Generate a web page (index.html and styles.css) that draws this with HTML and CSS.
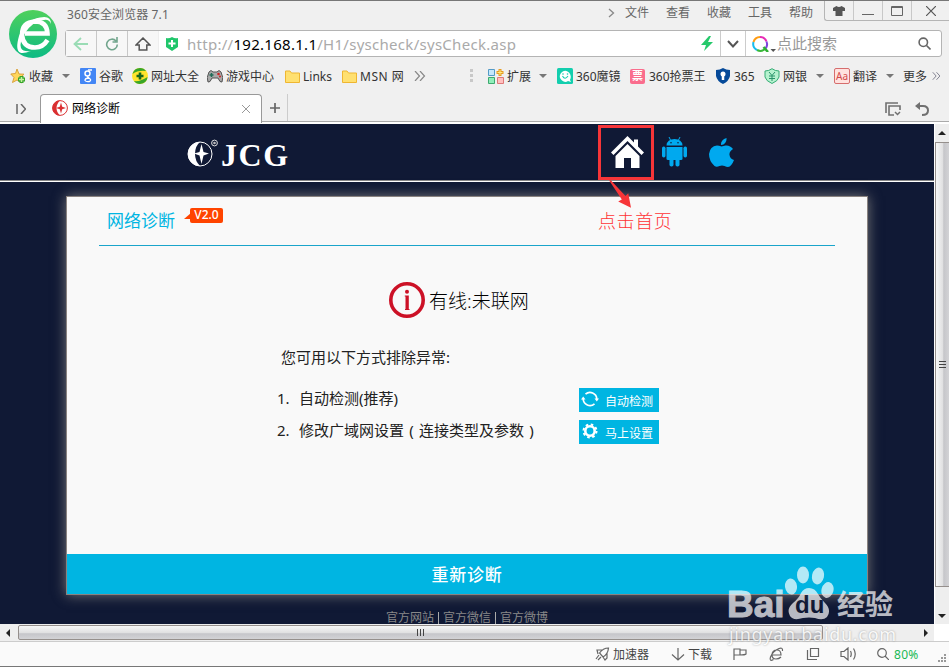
FILE: index.html
```html
<!DOCTYPE html>
<html lang="zh-CN">
<head>
  <meta charset="UTF-8" />
  <meta name="viewport" content="width=device-width, initial-scale=1.0"/>
  <title>网络诊断</title>
  <link rel="stylesheet" href="styles.css">
</head>
<body>
  <div class="window">
    <header class="top">
      <svg class="browser-logo" viewBox="0 0 48 48">
        <defs>
          <linearGradient id="green" x1="0" y1="0" x2="0" y2="1">
            <stop offset="0" stop-color="#4fd05c"/>
            <stop offset="1" stop-color="#0dbb84"/>
          </linearGradient>
        </defs>
        <circle cx="24" cy="24" r="24" fill="url(#green)"/>
        <path d="M16 23.500H38.500Q38 11.500 26 11.500Q13 12 13 25Q14 37.500 26 37.500Q34 37.500 38.500 30" fill="none" stroke="#fff" stroke-width="4.600"/>
        <path d="M42 14Q42 5 31 7.500Q16 10 10 26Q6 40 11 42.500Q14 44 22 41Q14 42 12 38Q10 32 16 23Q24 11 35 10Q40 9 42 14Z" fill="#fff"/>
      </svg>
      <div class="top-main">
        <div class="title-row">
          <span class="title">360安全浏览器 7.1</span>
          <nav class="menu">
            <svg class="menu-more" viewBox="0 0 7 10"><path d="M1 1L5.500 5L1 9"/></svg>
            <span>文件</span><span>查看</span><span>收藏</span><span>工具</span><span>帮助</span>
          </nav>
          <div class="controls">
            <span><svg width="12" height="10" viewBox="0 0 12 10"><path d="M3.500 0Q6 2 8.500 0L12 2V5H9.500V10H2.500V5H0V2Z" fill="#555"/></svg></span>
            <span><svg width="12" height="10" viewBox="0 0 12 10"><path d="M0 8.500H12" stroke="#666"/></svg></span>
            <span><svg width="12" height="10" viewBox="0 0 12 10"><path d="M.5 .5H11.500V9.500H.5ZM.5 1.500H11.500" fill="none" stroke="#666"/></svg></span>
            <span><svg width="10" height="10" viewBox="0 0 10 10"><path d="M0 0L10 10M10 0L0 10" stroke="#555" stroke-width="1.200"/></svg></span>
          </div>
        </div>
        <div class="address">
          <span class="nav-btn"><svg width="16" height="14" viewBox="0 0 16 14"><path d="M15 7H1.500M8 1L1.500 7L8 13" fill="none" stroke="#9adcb5" stroke-width="1.800"/></svg></span>
          <span class="nav-btn"><svg width="14" height="14" viewBox="0 0 14 14"><path d="M11 4A5.300 5.300 0 1 0 12.300 7.500M12 0V5H7.500" fill="none" stroke="#72a58d" stroke-width="1.600"/></svg></span>
          <span class="nav-btn home"><svg width="16" height="14" viewBox="0 0 16 14"><path d="M1 8L8 1L15 8H11.800V13H4.200V8Z" fill="none" stroke="#555" stroke-width="1.500"/></svg></span>
          <svg class="shield" viewBox="0 0 12 14"><path d="M0 1Q3 2 6 0Q9 2 12 1V10L6 14L0 10Z" fill="#20c66b"/><path d="M6 3V10M2.500 6.500H9.500" stroke="#fff" stroke-width="2"/></svg>
          <span class="url"><span class="scheme">http://</span><b>192.168.1.1</b><span class="path">/H1/syscheck/sysCheck.asp</span></span>
          <svg class="bolt" viewBox="0 0 12 15"><path d="M8 0L0 9H5L3 15L12 6H7L10 0Z" fill="#25c96b"/></svg>
          <span class="drop"><svg width="12" height="8" viewBox="0 0 12 8"><path d="M1 1L6 6.500L11 1" fill="none" stroke="#555" stroke-width="2"/></svg></span>
          <span class="search">
            <svg class="ring" viewBox="0 0 24 16">
              <g fill="none" stroke-width="2">
                <path d="M8 1A7 7 0 0 1 14.500 5.500" stroke="#e72bb5"/>
                <path d="M14.500 5.500A7 7 0 0 1 13 13" stroke="#7f45de"/>
                <path d="M13 13A7 7 0 0 1 5 14" stroke="#3ab839"/>
                <path d="M5 14A7 7 0 0 1 1.500 6" stroke="#18bbed"/>
                <path d="M1.500 6A7 7 0 0 1 8 1" stroke="#ff9c13"/>
                <path d="M11.500 11L16 16" stroke="#2eaf32" stroke-width="2.500"/>
              </g>
              <path d="M18.500 13H24L21.200 16Z" fill="#555"/>
            </svg>
            <span>点此搜索</span>
            <svg class="lens" viewBox="0 0 13 13"><circle cx="5.300" cy="5.300" r="4.200"/><path d="M8.500 8.500L12.500 12.500"/></svg>
          </span>
        </div>
      </div>
    </header>

    <div class="bookmarks">
      <span><svg class="icon" viewBox="0 0 16 16"><path d="M7 1L9 6L14 6.200L10.500 9.500L12 15L7 12L2.500 14.500L4 9.500L.8 6L5.500 5.500Z" fill="#ffd65b" stroke="#d9a23c"/><path d="M11.500 8V15M8 11.500H15" stroke="#36a52b" stroke-width="4"/><path d="M11.500 9V14M9 11.500H14" stroke="#c5f3a2" stroke-width="1.500"/></svg>收藏</span>
      <i class="caret"></i>
      <span><svg class="icon" viewBox="0 0 16 16"><rect width="16" height="16" rx="1" fill="#4386f5"/><circle cx="7.500" cy="5.500" r="2.500" fill="none" stroke="#fff" stroke-width="1.500"/><path d="M8 2H12M8 8Q7 9 9 10Q12 12 9.500 13.500Q6 14 5 12.500Q5 10 9 10" fill="none" stroke="#fff" stroke-width="1.300"/></svg>谷歌</span>
      <span><svg class="icon" viewBox="0 0 16 16"><circle cx="8" cy="8" r="8" fill="#ffe42c"/><path d="M.5 6Q2 0 8 0Q12 0 14 3Q6 2 .5 6M2 13Q8 14 15.500 9Q15 15 8 16Q4 16 2 13" fill="#39a629"/><path d="M8 4.500V11.500M4.500 8H11.500" stroke="#17671c" stroke-width="2.600"/></svg>网址大全</span>
      <span><svg class="icon" viewBox="0 0 16 16"><path d="M1 14Q-1 10 2 4Q4 1 6 4H10Q12 1 14 4Q17 10 15 14Q13 15 11 10H5Q3 15 1 14Z" fill="#a9a9a9" stroke="#555"/><path d="M4.500 5V9M2.500 7H6.500" stroke="#1d6b55" stroke-width="1.500"/><circle cx="11.500" cy="6" r="1.300" fill="#c22"/><circle cx="13" cy="8.500" r="1" fill="#c22"/></svg>游戏中心</span>
      <span><svg class="icon folder" viewBox="0 0 15 13"><path d="M.5 1H5L6.500 3H14.500V12.500H.5Z" fill="#ffe070" stroke="#efb631"/></svg>Links</span>
      <span class="msn"><svg class="icon folder" viewBox="0 0 15 13"><path d="M.5 1H5L6.500 3H14.500V12.500H.5Z" fill="#ffe070" stroke="#efb631"/></svg>MSN 网</span>
      <svg class="chevrons" viewBox="0 0 12 10"><path d="M1 0L5.500 5L1 10M6 0L10.500 5L6 10"/></svg>
      <svg class="dots" viewBox="0 0 4 14"><path d="M0 0H3V3H0ZM0 5H3V8H0ZM0 10H3V13H0Z" fill="#c8c8c8"/></svg>
      <span><svg class="icon" viewBox="0 0 16 16"><path d="M.5 1.500H6.500V7.500H.5Z" fill="#c5e7fb" stroke="#549bc7"/><path d="M.5 9.500H6.500V15.500H.5Z" fill="#91eeba" stroke="#3eaa70"/><path d="M9.500 9.500H15.500V15.500H9.500Z" fill="#ffc0c0" stroke="#df7878"/><path d="M12 1V8M8.500 4.500H15.500" stroke="#e79b22" stroke-width="3"/><path d="M12 2V7M9.500 4.500H14.500" stroke="#ffeb80"/></svg>扩展</span>
      <i class="caret"></i>
      <span><svg class="icon" viewBox="0 0 16 16"><rect width="16" height="16" rx="1.500" fill="#13ceae"/><path d="M13 12L14 14L11 13Q8 15 5 12.500Q1 9 4 5Q8 1 12 4.500Q15 8 13 12Z" fill="#fff"/><path d="M5.500 8Q8 12.500 11 8" fill="none" stroke="#13ceae" stroke-width="1.100"/><circle cx="6" cy="6" r=".8" fill="#13ceae"/><circle cx="10.500" cy="6" r=".8" fill="#13ceae"/></svg>360魔镜</span>
      <span><i class="ticket">票</i>360抢票王</span>
      <span><svg class="icon" viewBox="0 0 16 16"><path d="M1 2Q5 2 8 0Q11 2 15 2V8Q14 13 8 16Q2 13 1 8Z" fill="#064a99"/><circle cx="8" cy="6" r="2.500" fill="#fff"/><path d="M8 7V12" stroke="#fff" stroke-width="2.500"/></svg>365</span>
      <span><svg class="icon" viewBox="0 0 16 16"><path d="M1 3Q5 3 8 .7Q11 3 15 3V9Q14 13 8 15.500Q2 13 1 9Z" fill="#b6f2cf" stroke="#34ac74"/><path d="M5 4L8 7.500L11 4M8 7.500V13M5 8H11M5 10.500H11" fill="none" stroke="#28936a"/></svg>网银</span>
      <i class="caret"></i>
      <span><i class="translate">Aa</i>翻译</span>
      <i class="caret"></i>
      <span>更多</span>
      <svg class="chevrons small" viewBox="0 0 12 10"><path d="M1 0L5.500 5L1 10M6 0L10.500 5L6 10"/></svg>
    </div>

    <div class="tabs">
      <svg class="side-toggle" viewBox="0 0 10 10"><path d="M1 0V10M5 0L9.500 5L5 10"/></svg>
      <div class="tab">
        <svg class="tab-icon" viewBox="0 0 16 16"><circle cx="8" cy="8" r="7.400" fill="#fff" stroke="#da2f31"/><path d="M8 .5A7.500 7.500 0 0 0 8 15.500Q4.500 12 4.500 8Q4.500 4 8 .5Z" fill="#da2f31"/><path d="M9 2.500L10.200 6.800L14 8L10.200 9.200L9 13.500L7.800 9.200L4 8L7.800 6.800Z" fill="#da2f31"/></svg>
        <span>网络诊断</span>
        <svg class="tab-close" viewBox="0 0 8 8"><path d="M0 0L8 8M8 0L0 8"/></svg>
      </div>
      <div class="new-tab"><svg width="10" height="10" viewBox="0 0 10 10"><path d="M5 0V10M0 5H10" stroke="#666" stroke-width="1.700"/></svg></div>
      <svg class="tab-list" viewBox="0 0 16 14"><path d="M1 11V1H13M15 8V4H4V13H9" fill="none" stroke="#707070" stroke-width="1.600"/><path d="M10 10L12.500 12.500L15 10" fill="none" stroke="#707070" stroke-width="1.500"/></svg>
      <svg class="undo" viewBox="0 0 14 14"><path d="M2 4H8Q13 4 13 8.500Q13 13 7 13" fill="none" stroke="#707070" stroke-width="2"/><path d="M0 4L5 0V8Z" fill="#707070"/></svg>
    </div>

    <main class="view">
      <div class="page">
        <div class="site-head">
          <svg class="jcg-mark" viewBox="0 0 31 28"><circle cx="13" cy="15" r="12" fill="none" stroke="#fff"/><path d="M13 3A12 12 0 0 0 13 27Q8 22 8 15Q8 7 13 3Z" fill="#fff"/><path d="M14.500 5L16.500 13L22 14.500L16.500 16.500L14.500 25L12.500 16.500L7 14.500L12.500 13Z" fill="#fff"/><circle cx="27.500" cy="4" r="2.900" fill="none" stroke="#ddd" stroke-width="1"/><circle cx="27.500" cy="4" r="1.300" fill="#bbb"/></svg>
          <span class="jcg">JCG</span>
          <div class="site-icons">
            <svg class="site-home" viewBox="0 0 33 32"><path d="M16.500 0L23 6.500V3.500H27V10.500L33 16.500L30.500 19L16.500 5L2.500 19L0 16.500Z" fill="#fff"/><path d="M16.500 8L28.500 20V32H20V22H13V32H4.500V20Z" fill="#fff"/></svg>
            <svg class="android" viewBox="0 0 25 30"><g fill="#00a9ef"><path d="M4.500 8.500Q5 2 12.500 2Q20 2 20.500 8.500Z"/><path d="M4.500 10H20.500V22Q20.500 23 19 23H6Q4.500 23 4.500 22Z"/><rect y="9.500" width="3.500" height="11" rx="1.700"/><rect x="21.500" y="9.500" width="3.500" height="11" rx="1.700"/><rect x="7.500" y="20" width="4" height="9.500" rx="1.800"/><rect x="13.500" y="20" width="4" height="9.500" rx="1.800"/></g><path d="M7 0L9 4M18 0L16 4" stroke="#00a9ef"/><circle cx="9" cy="5.700" r=".8" fill="#101935"/><circle cx="16" cy="5.700" r=".8" fill="#101935"/></svg>
            <svg class="apple" viewBox="0 0 25 29"><path d="M17.500 0Q18 6 12 7Q11.500 2 17.500 0ZM12.500 8.500Q14.500 8 16.500 7.500Q21 7 24 11Q20 13.500 20.500 17Q21 21 25 22Q22.500 28.500 19 29Q17.500 29 15.500 28Q13 27 10.500 28Q7.500 29.500 5.500 28Q0 23 0 16Q1 8 8 7.500Q10 7.500 12.500 8.500Z" fill="#00a9ef"/></svg>
          </div>
        </div>

        <section class="card">
          <div class="card-head">
            <h1>网络诊断</h1>
            <span class="version">V2.0</span>
          </div>
          <div class="status">
            <svg viewBox="0 0 36 36"><circle cx="18" cy="18" r="16.200" fill="none" stroke="#cc1126" stroke-width="3.600"/><circle cx="18" cy="9.700" r="2" fill="#cc1126"/><path d="M15.800 13.500H19.800V27H20.500V28H16V27H16.500V14.500H15.800Z" fill="#cc1126"/></svg>
            <span>有线:未联网</span>
          </div>
          <p class="hint">您可用以下方式排除异常:</p>
          <ol class="steps">
            <li><i>1.</i><span>自动检测(推荐)</span>
              <button><svg width="18" height="16" viewBox="0 0 18 16"><path d="M4.500 3.200A6.800 6.800 0 0 1 15.800 8M13.500 12.800A6.800 6.800 0 0 1 2.200 8" fill="none" stroke="#fff" stroke-width="1.700"/><path d="M0 8.500L2.200 5.500L4.500 8.500ZM13.500 7.500L15.800 10.500L18 7.500Z" fill="#fff"/></svg>自动检测</button></li>
            <li><i>2.</i><span>修改广域网设置<em>(</em>连接类型及参数<em>)</em></span>
              <button><svg width="18" height="16" viewBox="0 0 18 16"><circle cx="9" cy="8" r="4.700" fill="none" stroke="#fff" stroke-width="2.600"/><circle cx="9" cy="8" r="6.500" fill="none" stroke="#fff" stroke-width="2" stroke-dasharray="2.550"/></svg>马上设置</button></li>
          </ol>
          <button class="retry">重新诊断</button>
        </section>

        <footer class="links"><span>官方网站</span><i></i><span>官方微信</span><i></i><span>官方微博</span></footer>
      </div>
      <div class="vscroll">
        <b class="arrow up"></b>
        <div class="vthumb"><i></i><i></i><i></i></div>
        <b class="arrow down"></b>
      </div>
    </main>

    <div class="hscroll">
      <b class="arrow left"></b>
      <div class="hthumb"><i></i><i></i><i></i></div>
      <b class="arrow right"></b>
    </div>

    <div class="statusbar">
      <span><svg width="15" height="14" viewBox="0 0 15 14"><path d="M13.500 1Q8 1 4.500 6L8 10Q13 7 13.500 1ZM7 3H2L3 7M8 10L10 13L12 11V6M4 8L1 12M6 10L3 13"/></svg>加速器</span>
      <span><svg width="14" height="13" viewBox="0 0 14 13"><path d="M7 0V12M1 6.500L7 12L13 6.500"/></svg>下载</span>
      <svg width="14" height="13" viewBox="0 0 14 13"><path d="M1 12V1H7V7H1M7 2H13V6Q12 7 7 7"/></svg>
      <svg width="15" height="15" viewBox="0 0 15 15"><path d="M3 8H12Q12 3 8 3Q3 3 3 8Q3 12 7 12Q10 12 12 10M13.500 4Q14 0 10 1.500Q4 4 1.500 10Q0 15 4.500 12.500"/></svg>
      <svg width="14" height="14" viewBox="0 0 14 14"><path d="M4.500 1.500H12.500V9.500H4.500ZM1.500 3V12.500H11"/></svg>
      <svg width="17" height="14" viewBox="0 0 17 14"><path d="M1 4.500H4L8 1V13L4 9.500H1ZM10.500 4Q12 7 10.500 10M13.500 1.500Q17 7 13.500 12.500"/></svg>
      <svg width="12" height="12" viewBox="0 0 12 12"><circle cx="5" cy="5" r="4.300"/><path d="M8 8L12 12"/></svg>
      <span class="zoom">80%</span>
      <svg class="grip" width="9" height="9" viewBox="0 0 9 9"><path d="M6 0H8V2H6ZM3 3H5V5H3ZM6 3H8V5H6ZM0 6H2V8H0ZM3 6H5V8H3ZM6 6H8V8H6Z"/></svg>
    </div>

    <!-- red callout over the home icon -->
    <div class="callout-box"></div>
    <svg class="callout-arrow" viewBox="0 0 24 31"><path d="M0 0H2L18 17L21 14L24 30L10 23L14 21Z" fill="#f73538"/></svg>
    <div class="callout-text">点击首页</div>

    <div class="watermark">
      <div class="wm-top">
        <span class="wm-bai">Bai</span>
        <span class="wm-paw">
          <svg viewBox="0 0 50 54"><g fill="#fff"><ellipse cx="7" cy="20.500" rx="6" ry="8" transform="rotate(-8 7 20.500)"/><ellipse cx="19" cy="9" rx="6" ry="8.500"/><ellipse cx="34" cy="10" rx="6" ry="8.500" transform="rotate(12 34 10)"/><ellipse cx="43.500" cy="24" rx="6" ry="8" transform="rotate(15 43.500 24)"/><path d="M25 22Q31 22 34 28Q36 32 41 37Q48 44 43 51Q39 55 31 52Q25 51 19 52Q9 55 6 50Q2 43 9 37Q15 32 17 27Q20 22 25 22Z"/></g></svg>
          <span>du</span>
        </span>
        <span class="wm-cn">经验</span>
      </div>
      <div class="wm-url">jingyan.baidu.com</div>
    </div>
  </div>
</body>
</html>
```

FILE: styles.css
```css
* {
  box-sizing: border-box;
}

body {
  margin: 0;
  font-family: "Noto Sans", "Noto Sans CJK SC", sans-serif;
  font-size: 12px;
  color: #333;
  overflow: hidden;
}

svg {
  display: block;
  flex-shrink: 0;
}

i, em {
  font-style: normal;
}

span {
  white-space: nowrap;
}

.window {
  position: relative;
  width: 949px;
  height: 667px;
  background: #f0f0f0;
  border-top: 1px solid #777;
  border-bottom: 1px solid #777;
  overflow: hidden;
}

/* title, menu and address bar */
.top {
  display: flex;
  height: 60px;
}

.browser-logo {
  width: 48px;
  height: 48px;
  margin: 9px 8px 0 9px;
}

.top-main {
  flex: 1;
}

.title-row {
  display: flex;
  height: 29px;
}

.title {
  width: 543px;
  padding-left: 2px;
  line-height: 27px;
  letter-spacing: 0.1px;
  color: #666;
}

.menu {
  display: flex;
  width: 216px;
  line-height: 24px;
  color: #666;
}

.menu span {
  width: 41px;
  flex-shrink: 0;
}

.menu-more {
  width: 7px;
  height: 10px;
  margin: 7px 10px 0 0;
  fill: none;
  stroke: #888;
  stroke-width: 1.3;
}

.controls {
  display: flex;
  width: 125px;
  height: 20px;
  border: 1px solid #b5b5b5;
  border-width: 0 0 1px 1px;
  border-radius: 0 0 0 3px;
}

.controls span {
  display: flex;
  width: 29px;
  align-items: center;
  justify-content: center;
  border-right: 1px solid #c8c8c8;
}

.controls span:last-child {
  width: 37px;
  border: 0;
}

.address {
  display: flex;
  align-items: center;
  width: 877px;
  height: 27px;
  background: #fff;
  border: 1px solid #b4b4b4;
  border-radius: 3px;
}

.nav-btn {
  display: flex;
  width: 31px;
  height: 25px;
  align-items: center;
  justify-content: center;
  background: #f7f7f7;
  border-right: 1px solid #c8c8c8;
}

.nav-btn.home {
  border-color: #eee;
}

.shield {
  width: 12px;
  height: 14px;
  margin: 0 9px 0 7px;
}

.url {
  width: 514px;
  font-size: 15px;
  line-height: 24px;
  letter-spacing: 0.28px;
  color: #aaa;
}

.url b {
  font-weight: normal;
  color: #000;
}

.bolt {
  width: 12px;
  height: 15px;
}

.drop {
  display: flex;
  width: 26px;
  height: 25px;
  margin-left: 7px;
  align-items: center;
  justify-content: center;
  border: 1px solid #ccc;
  border-width: 0 1px;
}

.search {
  display: flex;
  align-items: center;
  flex: 1;
  padding-left: 6px;
  font-size: 15px;
  color: #999;
}

.search span {
  margin-top: -2px;
}

.ring {
  width: 24px;
  height: 16px;
  margin-right: 1px;
}

.lens {
  width: 13px;
  height: 13px;
  margin-left: auto;
  margin-right: 10px;
  fill: none;
  stroke: #666;
  stroke-width: 1.6;
}

.bookmarks {
  display: grid;
  grid-template-columns: 52px 18px 52px 75px 78px 57px 72px 56px 18px 51px 18px 73px 85px 49px 52px 18px 52px 17px 29px 15px;
  align-items: center;
  height: 30px;
  padding-left: 10px;
}

.bookmarks > span {
  display: flex;
  align-items: center;
  gap: 3px;
}

.bookmarks .msn {
  letter-spacing: 0.5px;
}

.icon {
  width: 16px;
  height: 16px;
}

.icon.folder {
  width: 15px;
  height: 13px;
}

.caret {
  width: 7px;
  border: 4px solid transparent;
  border-top-color: #777;
  border-bottom: 0;
}

.chevrons {
  width: 12px;
  height: 10px;
  fill: none;
  stroke: #888;
  stroke-width: 1.2;
}

.chevrons.small {
  width: 9px;
  height: 8px;
  stroke: #778;
}

.dots {
  width: 4px;
  height: 14px;
}

.ticket, .translate {
  width: 16px;
  height: 16px;
  border-radius: 2px;
  line-height: 16px;
  text-align: center;
}

.ticket {
  width: 15px;
  height: 15px;
  margin-right: 1px;
  background: #fa6d8d;
  color: #fff;
  font-size: 11px;
  line-height: 14px;
  font-weight: bold;
}

.translate {
  background: #ffe2df;
  border: 1px solid #d66d6d;
  font-size: 10px;
  line-height: 14px;
  color: #d34b4b;
}

/* tab strip */
.tabs {
  display: flex;
  height: 33px;
  padding-top: 3px;
  border-bottom: 2px solid #fff;
  box-shadow: inset 0 -1px #aaa;
}

.side-toggle {
  width: 10px;
  height: 10px;
  margin: 10px 14px 0 16px;
  fill: none;
  stroke: #666;
  stroke-width: 1.5;
}

.tab {
  display: flex;
  align-items: center;
  width: 222px;
  height: 29px;
  padding: 0 11px;
  background: #fff;
  border: 1px solid #999;
  border-bottom: 0;
  border-radius: 4px 4px 0 0;
  color: #000;
}

.tab-icon {
  width: 16px;
  height: 16px;
  margin: -2px 4px 0 0;
}

.tab span {
  margin-top: -2px;
}

.tab-close {
  width: 8px;
  height: 8px;
  margin-left: auto;
  stroke: #999;
}

.new-tab {
  width: 26px;
  height: 27px;
  padding: 9px 0 0 8px;
  border-right: 1px solid #ccc;
}

.tab-list {
  width: 16px;
  height: 14px;
  margin: 8px 14px 0 auto;
}

.undo {
  width: 14px;
  height: 14px;
  margin: 8px 20px 0 0;
}

/* router page */
.view {
  display: flex;
  height: 500px;
}

.page {
  width: 934px;
  background: #101935;
  overflow: hidden;
}

.site-head {
  display: flex;
  height: 58px;
  padding-left: 187px;
  border-bottom: 1px solid #fff;
  box-shadow: inset 0 -1px #888;
}

.jcg-mark {
  width: 31px;
  height: 28px;
  margin-top: 15px;
}

.jcg {
  width: 393px;
  padding-left: 3px;
  font: bold 32px/62px "Liberation Serif", serif;
  letter-spacing: 1.6px;
  color: #fff;
}

.site-icons {
  display: flex;
  padding-top: 12px;
}

.site-home {
  width: 33px;
  height: 32px;
  margin-right: 18px;
}

.android {
  width: 25px;
  height: 30px;
  margin: 1px 22px 0 0;
}

.apple {
  width: 25px;
  height: 29px;
  margin-top: 2px;
}

.card {
  display: flex;
  flex-direction: column;
  width: 802px;
  height: 399px;
  margin: 14px 0 0 66px;
  background: #f9f9f9;
  border: 1px solid #8a8380;
  box-shadow: 0 0 12px #777;
}

.card-head {
  display: flex;
  width: 736px;
  height: 49px;
  margin-left: 32px;
  padding-left: 8px;
  border-bottom: 1px solid #1aa5cb;
}

.card-head h1 {
  margin: 0;
  font-size: 17px;
  font-weight: normal;
  line-height: 48px;
  color: #00b5e2;
}

.version {
  position: relative;
  width: 33px;
  height: 15px;
  margin: 11px 0 0 15px;
  background: #ff4400;
  border-radius: 2px;
  color: #fff;
  font-weight: 500;
  line-height: 14px;
  text-align: center;
}

.version::before {
  content: "";
  position: absolute;
  left: -6px;
  top: 5px;
  border: solid transparent;
  border-width: 0 0 6px 7px;
  border-bottom-color: #ff4400;
}

.status {
  display: flex;
  align-items: center;
  height: 36px;
  margin: 36px 0 0 322px;
  font-size: 19px;
  font-weight: 300;
  color: #000;
}

.status svg {
  width: 36px;
  height: 36px;
  margin-right: 4px;
}

.hint {
  margin: 27px 0 0 214px;
  font-size: 15px;
  line-height: 24px;
  color: #222;
}

.steps {
  margin: 19px 0 0 210px;
  padding: 0;
  list-style: none;
  font-size: 15px;
  color: #222;
}

.steps li {
  display: flex;
  height: 24px;
  margin-bottom: 8px;
  line-height: 20px;
}

.steps i {
  width: 22px;
}

.steps span {
  width: 280px;
}

.steps em {
  display: inline-block;
  width: 15px;
  text-align: center;
}

.steps button {
  display: flex;
  width: 80px;
  height: 24px;
  padding: 3px 0 0 2px;
  gap: 6px;
  background: #00b5e2;
  border: 0;
  color: #fff;
  font: 12px/20px "Noto Sans CJK SC", sans-serif;
}

.retry {
  height: 40px;
  margin-top: auto;
  padding: 0;
  background: #00b5e2;
  border: 0;
  color: #fff;
  font: 500 17px/38px "Noto Sans CJK SC", sans-serif;
  letter-spacing: 0.7px;
}

.links {
  display: flex;
  margin: 16px 0 0 386px;
  height: 13px;
  line-height: 13px;
  color: #888;
}

.links i {
  width: 1px;
  height: 12px;
  margin: 1px 4px 0;
  background: #aaa;
}

/* scrollbars */
.vscroll {
  display: flex;
  flex-direction: column;
  align-items: center;
  width: 15px;
  background: #eee;
  border-left: 1px solid #fff;
}

.arrow {
  border: 4px solid transparent;
}

.arrow.up {
  margin: 3px 0 7px;
  border-bottom-color: #222;
}

.vthumb {
  display: flex;
  flex-direction: column;
  justify-content: center;
  gap: 2px;
  width: 14px;
  height: 445px;
  padding-left: 3px;
  background: linear-gradient(90deg, #f7f7f7, #e1e1e2 50%, #c6c6ca 60%, #d3d3d6);
  border: 1px solid #958f8c;
  border-right: 0;
}

.vthumb i {
  width: 7px;
  height: 1px;
  background: #444;
}

.arrow.down {
  margin-top: 27px;
  border-top-color: #222;
}

.hscroll {
  display: flex;
  align-items: center;
  height: 17px;
  background: linear-gradient(90deg, #eee 934px, #fff 934px);
}

.arrow.left {
  margin: 0 8px 0 2px;
  border-right-color: #222;
}

.hthumb {
  display: flex;
  justify-content: center;
  align-items: center;
  gap: 2px;
  width: 805px;
  height: 15px;
  background: linear-gradient(#f7f7f7, #e1e1e2 50%, #c6c6ca 60%, #d3d3d6);
  border: 1px solid #958f8c;
  border-radius: 2px;
}

.hthumb i {
  width: 1px;
  height: 7px;
  background: #444;
}

.arrow.right {
  margin-left: 101px;
  border-left-color: #222;
}

.statusbar {
  display: grid;
  grid-template-columns: 76px 62px 36px 37px 34px 37px 17px 44px 11px;
  align-items: center;
  height: 25px;
  padding-left: 595px;
  background: #fafafa;
  border-top: 1px solid #ccc;
  color: #444;
}

.statusbar span {
  display: flex;
  align-items: center;
  gap: 3px;
}

.statusbar svg {
  fill: none;
  stroke: #666;
  stroke-width: 1.2;
}

.statusbar .zoom {
  letter-spacing: 0.3px;
  color: #19b955;
}

.statusbar .grip {
  margin-top: 8px;
  fill: #999;
  stroke: none;
}

/* callout drawn over the page */
.callout-box {
  position: absolute;
  left: 598px;
  top: 124px;
  width: 56px;
  height: 55px;
  border: 3px solid #f73538;
}

.callout-arrow {
  position: absolute;
  left: 609px;
  top: 178px;
  width: 22px;
  height: 31px;
}

.callout-text {
  position: absolute;
  left: 598px;
  top: 205px;
  font: 300 18px/28px "Noto Sans CJK SC", sans-serif;
  letter-spacing: 0.6px;
  color: #ff3336;
}

.watermark {
  position: absolute;
  left: 727px;
  top: 565px;
  width: 180px;
  height: 84px;
  color: #fff;
  opacity: 0.7;
}

.wm-top {
  display: flex;
  height: 54px;
}

.wm-bai {
  width: 57px;
  font: bold 37px/77px "Liberation Sans", sans-serif;
  -webkit-text-stroke: 1px #fff;
}

.wm-paw {
  position: relative;
  width: 53px;
}

.wm-paw svg {
  width: 50px;
  height: 54px;
}

.wm-paw span {
  position: absolute;
  left: 11px;
  top: 26px;
  font: bold 24px/26px "Liberation Sans", sans-serif;
  color: #101935;
}

.wm-cn {
  font: bold 28px/75px "Noto Sans CJK SC", sans-serif;
}

.wm-url {
  padding-left: 2px;
  font-size: 18px;
  line-height: 28px;
  letter-spacing: 0.7px;
  text-shadow: 0 0 2px #777;
}
```
